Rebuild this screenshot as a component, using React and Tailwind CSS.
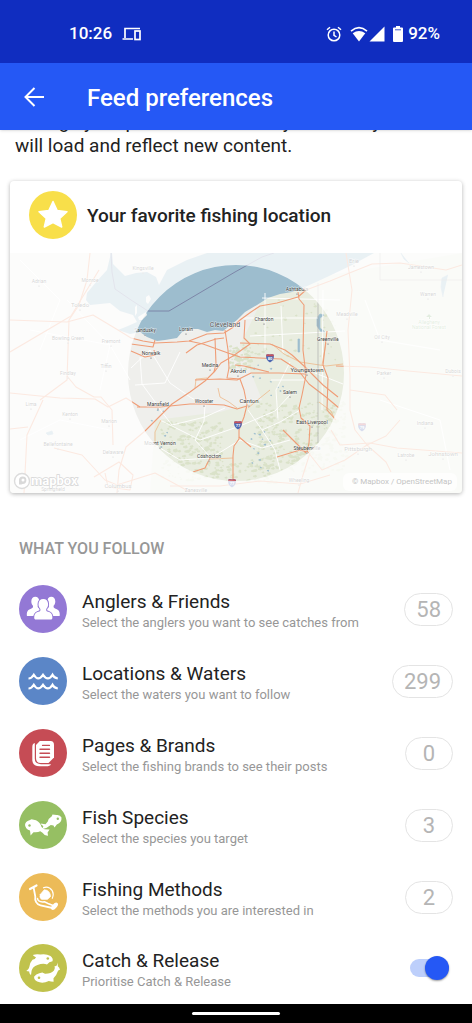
import React from "react";

const orangeRoads = [
  "M131 338 L143 341 L155 343 L177 342 L189 341 L207 334 L224 333 L232 328 L240 320 L251 312 L260 306 L277 303 L298 297 L306 290 L330 281 L352 272 L372 264 L400 263 L420 266 L446 270 L462 265",
  "M155 340 L153 347 L131 344",
  "M131 351 L145 357 L155 355 L154 350",
  "M189 341 L203 344 L228 353 L240 357 L281 359 L298 370 L309 384 L326 397 L339 408",
  "M145 431 L158 418 L172 404 L190 392 L205 381 L215 371 L221 363 L233 356 L250 344 L244 338 L245 320",
  "M225 330 L228 350 L229 368 L227 378 L240 379 L244 390 L247 405 L244 417 L239 430 L239 439 L234 446 L233 456 L233 484",
  "M239 437 L251 447",
  "M215 338 L216 364 L214 372",
  "M186 353 L197 345 L216 339 L224 338",
  "M298 292 L299 299 L304 305 L303 350 L306 375 L302 395 L299 408 L301 418 L310 426 L309 443 L307 452",
  "M137 407 L160 407 L190 404 L205 404 L224 405 L237 409 L247 406",
  "M195 380 L220 379 L237 380 L251 373 L279 373 L306 374",
  "M235 365 L244 366 L269 372",
  "M240 343 L270 344 L285 350 L292 355 L304 366 L323 385 L338 397",
  "M327 331 L323 365 L328 378 L327 410 L336 420",
  "M10 393 L60 398 L95 399 L108 407 L126 398 L140 407",
  "M40 400 L67 380 L69 320 L79 305 L87 280 L90 253",
  "M67 376 L76 387 L94 397 L101 397 L112 410 L113 445",
  "M24 493 L27 435 L43 400",
  "M10 320 L67 322 L93 315 L118 330 L131 338",
  "M10 352 L71 316 L99 270",
  "M145 431 L126 447 L119 470 L117 493",
  "M54 448 L82 455 L105 480 L117 485 L155 473 L190 492",
  "M94 477 L119 462 L133 475 L130 490 L108 487 L105 473",
  "M10 429 L28 427",
  "M346 253 L352 290 L348 330 L350 376 L350 410 L355 430 L367 445 L386 462 L391 472",
  "M336 366 L370 367 L408 371 L462 376",
  "M307 451 L322 470 L345 460 L367 445 L386 436 L400 420",
  "M331 430 L340 445 L370 443 L397 448 L462 453",
  "M350 390 L385 395 L397 410",
  "M310 453 L303 475 L298 493",
  "M170 486 L220 486 L260 481 L300 484 L330 475",
  "M283 430 L306 453 M277 457 L300 450 L307 452",
  "M193 472 L205 468 L210 458",
];

const yellowRoads = [
  "M195 388 L196 379 L207 378",
  "M218 388 L220 397 L229 402 L237 408",
  "M155 447 L155 432 L161 420",
  "M272 344 L284 354 L300 362 L326 366 L343 364",
  "M319 402 L331 411 L335 420",
  "M210 459 L233 458",
  "M248 408 L260 398 L270 390",
  "M326 343 L322 365",
];

const whiteRoads = [
  "M131 368 L150 350 L170 383 L190 397 L204 405",
  "M135 385 L165 383 L180 352",
  "M140 357 L142 384 L158 406",
  "M158 407 L172 425 L205 417 L225 408",
  "M160 420 L200 440 L240 426 L275 411 L290 395",
  "M205 405 L204 421 L195 440 L210 457",
  "M155 445 L180 460 L211 458 L240 440 L262 448 L290 440",
  "M248 410 L262 430 L275 450 L280 470",
  "M265 293 L265 350 M242 318 L318 318 M281 306 L283 353",
  "M250 336 L345 331 M262 298 L340 300 M323 290 L322 410",
  "M271 380 L305 380 M290 362 L276 390 L278 420",
  "M300 410 L280 422 L262 430 M315 373 L343 384",
  "M20 260 L60 300 L40 350 M67 300 L110 345 L100 390",
  "M30 330 L110 345 L130 380 M20 440 L60 420 L110 430",
  "M365 300 L380 340 L440 350 M380 400 L440 420 L450 470",
];

const faintCities = [
  ["Kingsville", 143, 270], ["Adrian", 39, 283], ["Monroe", 90, 282], ["Toledo", 80, 307],
  ["Bowling Green", 68, 340], ["Fremont", 111, 343], ["Tiffin", 106, 368], ["Findlay", 68, 375],
  ["Lima", 31, 406], ["Kenton", 70, 416], ["Marion", 109, 423], ["Bellefontaine", 58, 446],
  ["Delaware", 113, 454], ["Springfield", 53, 491], ["Columbus", 118, 488], ["Zanesville", 196, 492],
  ["Erie", 354, 263], ["Jamestown", 421, 269], ["Warren", 428, 296], ["Meadville", 347, 316],
  ["Oil City", 382, 339], ["Parker", 384, 375], ["Dubois", 453, 373], ["Indiana", 425, 425],
  ["Pittsburgh", 358, 451], ["Latrobe", 406, 457], ["Johnstown", 443, 456], ["Wheeling", 299, 482],
];

const cities = [
  ["Sandusky", 145, 332], ["Lorain", 186, 331], ["Norwalk", 151, 355], ["Medina", 210, 367],
  ["Akron", 238, 373], ["Mansfield", 158, 406], ["Wooster", 204, 403], ["Canton", 249, 403],
  ["Chardon", 264, 321], ["Ashtabula", 297, 291], ["Greenville", 328, 341], ["Youngstown", 307, 372],
  ["Salem", 290, 394], ["East Liverpool", 312, 424], ["Steubenville", 307, 450],
  ["Mount Vernon", 160, 445], ["Coshocton", 209, 458],
];

const bigCities = ["Akron", "Canton", "Youngstown", "Pittsburgh", "Columbus", "Toledo", "Erie", "Johnstown"];

function speckle(count, x, y, w, h, seed, size) {
  let s = seed;
  const next = () => {
    s = (s * 16807) % 2147483647;
    return s / 2147483647;
  };
  let d = "";
  for (let i = 0; i < count; i++) {
    const px = x + next() * w;
    const py = y + next() * h;
    const r = 1 + next() * size;
    d += `M${px.toFixed(1)} ${py.toFixed(1)}l${r.toFixed(1)} -1l1 ${(r * 0.6).toFixed(1)}l-${(r * 0.5).toFixed(1)} 1l-${(r * 0.8).toFixed(1)} -0.6z`;
  }
  return d;
}

const woods =
  speckle(190, 160, 422, 60, 58, 77, 3) +
  speckle(300, 255, 402, 90, 70, 991, 3) +
  speckle(50, 228, 345, 22, 24, 51, 4) +
  speckle(40, 250, 295, 85, 65, 402, 2) +
  speckle(60, 215, 460, 60, 22, 815, 3);
const ponds = speckle(12, 240, 360, 45, 40, 93, 1) + speckle(14, 250, 420, 20, 60, 1234, 1) + speckle(6, 150, 400, 20, 50, 3333, 1);

function CityLabel({ name, x, y }) {
  const big = bigCities.includes(name);
  return (
    <g>
      <circle cx={x} cy={y + 3} r="0.6" />
      <text x={x} y={y} textAnchor="middle" fontSize={big ? 6 : 5}>{name}</text>
    </g>
  );
}

function Shield({ x, y, label }) {
  return (
    <g transform={`translate(${x} ${y})`}>
      <path d="M-3.6 -3.5Q-2 -4.2 0 -3.5Q2 -4.2 3.6 -3.5Q5 2 0 4.5Q-5 2 -3.6 -3.5Z" fill="#4d67b0" stroke="#fff" strokeWidth="0.4" />
      <path d="M-3.6 -3.5Q-2 -4.2 0 -3.5Q2 -4.2 3.6 -3.5L3.9 -1.8H-3.9Z" fill="#c9535b" stroke="none" />
      <text y="2.4" textAnchor="middle" fontSize="4" fill="#fff" stroke="none" fontWeight="700">{label}</text>
    </g>
  );
}

function RegionMap() {
  return (
    <svg viewBox="10 253 452 240" className="block w-full" role="img" aria-label="Map of northern Ohio">
      <rect x="10" y="253" width="452" height="240" fill="#efefec" />
      <path d="M300 280L462 253V493H150L155 420L220 412L262 400L240 345L262 300Z" fill="#e9ede0" />
      <path d={woods} fill="#dae2c9" />
      <path
        d="M111 253L107 270L97 281L87 293L86 300L90 305L110 303L120 311L133 315L137 322L128 326L118 330L130 334L140 332L147 337L157 341L165 340L177 338L182 332L190 329L198 329L207 332L215 330L223 331L231 325L237 320L245 312L257 305L268 298L280 294L292 292L303 288L327 277L352 265L374 253H207L187 260L167 270L159 285L156 277L147 272L136 273L125 276L113 264L112 253Z"
        fill="#9dbdce"
      />
      <path d="M146 297l3-2 2 4-3 5-2-2zM135 307l2-2v8l-2 3zM138 317l8-5 1 3-5 5-3 0z" fill="#f1f1ee" />
      <path d="M111 253L112 272L115 289L131 300L148 311H169L235 272L262 257L274 253" fill="none" stroke="#7d86a8" strokeWidth="1" />
      <path d="M317 318l3 -4 4 1-4 3v10l5 4-4 0-4-6zM298 339h1.600v13h-1.600zM401 253l3 6 5 4M448 275l-6 3-1 9 2 10M46 433l6-2 1 3-5 1z" fill="#9dbdce" stroke="#9dbdce" strokeWidth="0.7" />
      <path d={ponds} fill="#9dbdce" />
      <g fill="none" stroke="#fff" strokeWidth="0.9">
        {whiteRoads.map((d) => <path key={d} d={d} />)}
      </g>
      <g fill="none" stroke="#eeb98a" strokeWidth="0.8" strokeLinejoin="round">
        {yellowRoads.map((d) => <path key={d} d={d} />)}
      </g>
      <g fill="none" stroke="#ef9d77" strokeWidth="1.1" strokeLinejoin="round">
        {orangeRoads.map((d) => <path key={d} d={d} />)}
      </g>
      <path d="M318 283V443M380 253V280H462" fill="none" stroke="#a5a5a5" strokeWidth="0.6" />
      <g className="font-['Roboto',sans-serif]" fill="#404040" stroke="#fff" strokeWidth="1" strokeOpacity="0.6" paintOrder="stroke">
        {faintCities.map(([name, x, y]) => <CityLabel key={name} name={name} x={x} y={y} />)}
        {cities.map(([name, x, y]) => <CityLabel key={name} name={name} x={x} y={y} />)}
        <text x="225" y="327" textAnchor="middle" fontSize="7" fill="#555">Cleveland</text>
        <Shield x={270} y={358} label="80" />
        <Shield x={238} y={425} label="77" />
        <Shield x={362} y={427} label="79" />
        <Shield x={232} y={483} label="77" />
        <g fill="#7fae74">
          <path d="M429 314l3 3h-2v2h-1v-2h-3z" />
          <text x="429" y="324" textAnchor="middle" fontSize="5">Allegheny</text>
          <text x="429" y="329" textAnchor="middle" fontSize="5">National Forest</text>
        </g>
      </g>
      <path d="M10 253H462V493H10ZM236 265A108 108 0 1 0 236 481A108 108 0 1 0 236 265Z" fill="#fff" fillOpacity="0.78" fillRule="evenodd" />
      <g className="font-['Roboto',sans-serif]">
        <circle cx="22" cy="481" r="7.500" fill="#fff" stroke="#dcdcdc" strokeWidth="1.400" />
        <path d="M19 484.500V480a3.700 3.700 0 1 1 3.700 3.900Q21 484.600 19 484.500Z" fill="#d9d9d9" />
        <circle cx="23" cy="480" r="1.500" fill="#fff" />
        <text x="31" y="485" fontSize="13" fontWeight="700" fill="#fff" stroke="#d6d6d6" strokeWidth="1.500" paintOrder="stroke">mapbox</text>
        <rect x="343" y="473" width="114" height="18" rx="6" fill="#fff" fillOpacity="0.7" />
        <text x="352" y="484" fontSize="8" fill="#c4c4c4">© Mapbox / OpenStreetMap</text>
      </g>
    </svg>
  );
}

function PeopleIcon() {
  return (
    <svg viewBox="0 0 48 48" className="size-12" fill="#fff" aria-hidden="true">
      <path d="M12.300 16.500c0-3 1.600-4.800 4-4.800s4 1.800 4 4.800c0 1.900-.8 3.400-1.600 4.300v1.300c0 .8 2.800 1.500 4.300 2.500v6.400H8.600c-.6 0-.8-.4-.8-1 0-4.400 1.600-5.200 3.700-6 1.400-.5 2.500-1 2.500-1.900v-1.300c-1-.9-1.700-2.400-1.700-4.300Z" />
      <path d="M36.300 16.500c0-3-1.600-4.800-4-4.800s-4 1.800-4 4.800c0 1.900.8 3.400 1.600 4.300v1.300c0 .8-2.800 1.500-4.300 2.500v6.400H40c.6 0 .8-.4.8-1 0-4.400-1.600-5.200-3.700-6-1.400-.5-2.500-1-2.500-1.900v-1.300c1-.9 1.700-2.400 1.700-4.300Z" />
      <path d="M19.500 19.300c0-3.300 2-5.200 4.800-5.200s4.800 1.900 4.800 5.200c0 2-.8 3.600-1.900 4.600v1.300c0 1 1.500 1.400 2.900 1.900 2.200.8 3.300 2.400 3.300 5.700 0 1.100-.6 1.800-1.700 1.800H16.900c-1.100 0-1.700-.7-1.700-1.800 0-3.300 1.100-4.900 3.300-5.700 1.400-.5 2.900-.9 2.900-1.900v-1.300c-1.100-1-1.900-2.600-1.900-4.600Z" stroke="#9378d5" strokeWidth="2" paintOrder="stroke" />
    </svg>
  );
}

function WavesIcon() {
  return (
    <svg viewBox="0 0 48 48" className="size-12" fill="none" stroke="#fff" strokeWidth="2.2" strokeLinejoin="miter" aria-hidden="true">
      <path d="M9.500 21.500C11.500 21.500 13.500 20 14.800 17.800Q19 25 24 17.800Q29 25 33.500 17.800Q35 21 38.800 21.500" />
      <path d="M9.500 31.500C11.500 31.500 13.500 30 14.800 27.800Q19 35 24 27.800Q29 35 33.500 27.800Q35 31 38.800 31.500" />
    </svg>
  );
}

function PagesIcon() {
  return (
    <svg viewBox="0 0 48 48" className="size-12" aria-hidden="true">
      <path d="M15.800 14Q13.300 14.500 13.300 18V31.500Q14 37.300 20.500 37.300H27Q31 37.300 32 35.200H22Q15.800 35 15.800 29.500Z" fill="#fff" />
      <path d="M20.800 12H31.500Q35 12.200 35 16V28.500L29.500 34H21.500Q17 34 17 29V16Z" fill="#fff" />
      <path d="M21 20.200H30.500M21 24.200H30.500M21 28.200H30.500" stroke="#c64c55" strokeWidth="1.400" strokeLinecap="round" />
      <path d="M23.500 16.400H30.500" stroke="#c64c55" strokeWidth="1.200" strokeLinecap="round" />
    </svg>
  );
}

function FishIcon() {
  return (
    <svg viewBox="0 0 48 48" className="size-12" fill="#fff" aria-hidden="true">
      <path d="M6 24Q6.300 20.300 10.500 19.300L12.500 18.200L17 19.300Q21.300 21.500 22.500 26L25.500 28.300L30.600 28.600L28.600 31.500L29 34.800Q25.500 35 23.500 31.800L21.300 30.300Q18.300 31.800 14.500 31.200L11.600 34.600L11 29.600Q6.500 28 6 24Z" />
      <path d="M42.500 16.500Q41 13.500 37.500 14L33.500 13.500L32.800 15.200Q29.500 17.200 28.800 20.600L26.500 23.200L21.500 22.500Q22.500 24 24.300 25L23.800 27.200Q27.500 28 29.500 25.600L31.800 24L34.500 24.500L35.500 26.500L37.800 23.600Q43 21.500 42.500 16.500Z" />
      <circle cx="10.500" cy="24.500" r="1.200" fill="#96bf63" />
      <circle cx="38.800" cy="17.700" r="1.200" fill="#96bf63" />
    </svg>
  );
}

function ReelIcon() {
  return (
    <svg viewBox="0 0 48 48" className="size-12" fill="none" stroke="#fff" strokeLinecap="round" aria-hidden="true">
      <path d="M11 16L17.500 12.500" strokeWidth="2.200" />
      <path d="M14.700 15L16.300 23.500C15.600 27.500 17.500 31.500 21.500 32.400L33.500 35" strokeWidth="1.800" />
      <path d="M18.500 25.500C19 29 21.500 29.300 25.500 28.800L29 30.500L34 32.500" strokeWidth="1.600" />
      <path d="M21.300 21.500L25.300 16.800Q31 17.200 31.500 23.500L28.500 26.300H22.500Q20 24.500 21.300 21.500Z" fill="#fff" strokeWidth="0.8" />
      <path d="M24.500 14.800C28.800 12.800 34 16 34.200 21.300Q34.200 23.500 33.300 25.300" strokeWidth="1.200" />
      <ellipse cx="35.500" cy="33.300" rx="4.400" ry="2.300" transform="rotate(-48 35.500 33.300)" fill="#fff" stroke="none" />
    </svg>
  );
}

function ReleaseIcon() {
  return (
    <svg viewBox="0 0 48 48" className="size-12" fill="#fff" aria-hidden="true">
      <path d="M13.500 15.800Q16.300 15.500 17 13.200Q14.800 12.500 13.800 11Q17.500 9.800 21.300 10.600Q27 9.500 31.500 12Q34.500 14.200 33.500 17.200Q30 17.800 28 20.500Q24 19 18.500 21Q13.500 22.800 12.600 26.800L12 31.300Q9.800 29.300 10.200 27.600L7.300 27Q9.800 25.500 10.300 23Q10.500 19 13.500 15.800Z" />
      <path d="M38.800 22.300Q40.600 23.800 41 25.700Q39.200 26 38.700 27.500Q37.500 31.500 34.500 34.300L34.600 37.800Q31.800 37.500 29.800 37Q23.500 40 18.200 37.500Q14.500 35.500 15.200 32.500Q17 30 20.300 29.300L23.300 28.600L26 29.800Q31.500 30 35 26.600Q36.600 24.500 35.500 22.300L37.300 22Q38.500 20 38.700 18.500Z" />
      <circle cx="28.800" cy="14.500" r="1.300" fill="#c0c24c" />
      <circle cx="20" cy="33.700" r="1.300" fill="#c0c24c" />
    </svg>
  );
}

function StarIcon() {
  return (
    <svg viewBox="0 0 48 48" className="size-12" aria-hidden="true">
      <path d="M24 10.500L28.200 19.600L38 20.700L30.700 27.400L32.700 36L24 31.500L15.300 36L17.300 27.400L10 20.700L19.800 19.600Z" fill="#fff" stroke="#fff" strokeWidth="1.500" strokeLinejoin="round" />
    </svg>
  );
}

const follows = [
  { title: "Anglers & Friends", note: "Select the anglers you want to see catches from", count: 58, color: "bg-[#9378d5]", Icon: PeopleIcon },
  { title: "Locations & Waters", note: "Select the waters you want to follow", count: 299, color: "bg-[#5b86c7]", Icon: WavesIcon },
  { title: "Pages & Brands", note: "Select the fishing brands to see their posts", count: 0, color: "bg-[#c64c55]", Icon: PagesIcon },
  { title: "Fish Species", note: "Select the species you target", count: 3, color: "bg-[#96bf63]", Icon: FishIcon },
  { title: "Fishing Methods", note: "Select the methods you are interested in", count: 2, color: "bg-[#ecbb58]", Icon: ReelIcon },
];

function RowBody({ title, note, color, Icon }) {
  return (
    <>
      <span className={`size-12 shrink-0 overflow-hidden rounded-full ${color}`}><Icon /></span>
      <span className="flex min-w-0 flex-1 flex-col pt-[3px] pl-[15px]">
        <span className="text-[19px] leading-6 text-[#222]">{title}</span>
        <span className="text-[13px] leading-[18px] text-[#979797]">{note}</span>
      </span>
    </>
  );
}

function StatusBar() {
  return (
    <div className="flex h-[63px] items-center justify-between bg-[#102dc0] pt-1 pr-8 pl-[69px] text-[17px] font-medium text-white">
      <div className="flex items-center gap-[10px]">
        <span>10:26</span>
        <svg viewBox="0 0 20 14" className="h-[14px] w-5" fill="none" stroke="#fff" strokeWidth="1.700" aria-hidden="true">
          <path d="M3 11V1.500H18M0.500 12H11" />
          <rect x="13" y="4" width="5" height="8.500" />
        </svg>
      </div>
      <div className="flex items-center">
        <svg viewBox="0 0 16 16" className="size-4" fill="none" stroke="#fff" strokeWidth="1.500" aria-hidden="true">
          <circle cx="8" cy="9" r="5.800" />
          <path d="M8 5.500V9.300L10.500 11M1 3.800L4 1.200M15 3.800L12 1.200" />
        </svg>
        <svg viewBox="0 0 18 16" className="ml-2 h-4 w-[18px]" fill="#fff" aria-hidden="true">
          <path d="M9 15.500L2.700 7.300Q9 2.500 15.300 7.300Z" />
          <path d="M1 5.200Q9 -1.800 17 5.200" fill="none" stroke="#fff" strokeWidth="1.600" />
        </svg>
        <svg viewBox="0 0 16 16" className="ml-px size-4" fill="#fff" aria-hidden="true"><path d="M15.500 0.500V15.500H0.500Z" /></svg>
        <svg viewBox="0 0 10 16" className="ml-2 h-4 w-[10px]" fill="#fff" aria-hidden="true">
          <path d="M3 0H7V1.500H9Q10 1.500 10 2.500V15Q10 16 9 16H1Q0 16 0 15V2.500Q0 1.500 1 1.500H3Z" />
          <path d="M2 3.800H8" stroke="#102dc0" strokeWidth="0.8" />
        </svg>
        <span className="ml-[5px]">92%</span>
      </div>
    </div>
  );
}

export default function App() {
  return (
    <div className="flex min-h-screen flex-col bg-white font-['Roboto',sans-serif]">
      <header className="relative z-10 shadow">
        <StatusBar />
        <div className="flex h-[67px] items-center bg-[#2558f5] pl-[22px] text-white">
          <button type="button" aria-label="Back" className="flex size-6 items-center justify-center">
            <svg viewBox="0 0 24 24" className="size-6" fill="none" stroke="#fff" strokeWidth="2" aria-hidden="true">
              <path d="M22 12H4M12.500 3L3.500 12L12.500 21" />
            </svg>
          </button>
          <h1 className="pt-[3px] pl-[41px] text-2xl font-medium">Feed preferences</h1>
        </div>
      </header>

      <main className="flex-1">
        <p className="-mt-5 px-[15px] text-[19px] leading-6 text-[#222]">
          Change your preferences directly and easily<br />
          will load and reflect new content.
        </p>

        <section className="mx-[10px] mt-[23px] overflow-hidden rounded-sm bg-white shadow-[0_1px_4px_rgba(0,0,0,0.3)]">
          <div className="flex h-[72px] items-center pb-1 pl-[19px]">
            <span className="size-12 shrink-0 rounded-full bg-[#f8df4a]"><StarIcon /></span>
            <h2 className="pt-[2px] pl-[10px] text-[19px] font-medium text-[#222]">Your favorite fishing location</h2>
          </div>
          <RegionMap />
        </section>

        <h2 className="mt-[46px] px-[19px] text-base leading-5 font-medium text-[#979797]">WHAT YOU FOLLOW</h2>

        <ul className="mt-[14px]">
          {follows.map(({ count, ...row }) => (
            <li key={row.title}>
              <button type="button" className="flex h-[72px] w-full items-center px-[19px] text-left">
                <RowBody {...row} />
                <span className="flex h-[33px] min-w-12 items-center justify-center rounded-full border border-[#e4e4e4] px-[11px] text-[22px] text-[#b5b5b5]">{count}</span>
              </button>
            </li>
          ))}
          <li>
            <label className="flex h-[70px] items-center pr-[23px] pl-[19px]">
              <RowBody title="Catch & Release" note="Prioritise Catch & Release" color="bg-[#c0c24c]" Icon={ReleaseIcon} />
              <input
                type="checkbox"
                role="switch"
                defaultChecked
                className="flex h-[18px] w-[39px] appearance-none items-center justify-start rounded-full bg-[#bdcffb] before:size-6 before:shrink-0 before:rounded-full before:bg-[#2558f5] before:shadow-[0_1px_2px_rgba(0,0,0,0.4)] checked:justify-end"
              />
            </label>
          </li>
        </ul>
      </main>

      <footer className="flex h-[19px] items-center justify-center bg-black">
        <div className="h-[3px] w-[88px] rounded-full bg-white" />
      </footer>
    </div>
  );
}
